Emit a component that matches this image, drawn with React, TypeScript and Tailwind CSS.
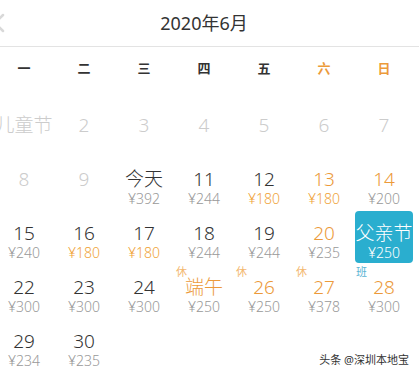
import React from "react";

type Cell = {
  label?: string;
  price?: string;
  labelColor?: string;
  priceColor?: string;
  tag?: string;
  tagColor?: string;
  selected?: boolean;
};

const GRAY = "text-[#cccccc]";
const DARK = "text-[#333333]";
const ORANGE = "text-[#ec9a3a]";
const PORANGE = "text-[#f0a43a]";
const PGRAY = "text-[#999999]";

const rows: Cell[][] = [
  [
    { label: "儿童节", labelColor: GRAY },
    { label: "2", labelColor: GRAY },
    { label: "3", labelColor: GRAY },
    { label: "4", labelColor: GRAY },
    { label: "5", labelColor: GRAY },
    { label: "6", labelColor: GRAY },
    { label: "7", labelColor: GRAY },
  ],
  [
    { label: "8", labelColor: GRAY },
    { label: "9", labelColor: GRAY },
    { label: "今天", labelColor: DARK, price: "¥392", priceColor: PGRAY },
    { label: "11", labelColor: DARK, price: "¥244", priceColor: PGRAY },
    { label: "12", labelColor: DARK, price: "¥180", priceColor: PORANGE },
    { label: "13", labelColor: ORANGE, price: "¥180", priceColor: PORANGE },
    { label: "14", labelColor: ORANGE, price: "¥200", priceColor: PGRAY },
  ],
  [
    { label: "15", labelColor: DARK, price: "¥240", priceColor: PGRAY },
    { label: "16", labelColor: DARK, price: "¥180", priceColor: PORANGE },
    { label: "17", labelColor: DARK, price: "¥180", priceColor: PORANGE },
    { label: "18", labelColor: DARK, price: "¥244", priceColor: PGRAY },
    { label: "19", labelColor: DARK, price: "¥244", priceColor: PGRAY },
    { label: "20", labelColor: ORANGE, price: "¥235", priceColor: PGRAY },
    { label: "父亲节", labelColor: "text-white", price: "¥250", priceColor: "text-white", selected: true },
  ],
  [
    { label: "22", labelColor: DARK, price: "¥300", priceColor: PGRAY },
    { label: "23", labelColor: DARK, price: "¥300", priceColor: PGRAY },
    { label: "24", labelColor: DARK, price: "¥300", priceColor: PGRAY },
    { label: "端午", labelColor: ORANGE, price: "¥250", priceColor: PGRAY, tag: "休", tagColor: "text-[#f3b870]" },
    { label: "26", labelColor: ORANGE, price: "¥250", priceColor: PGRAY, tag: "休", tagColor: "text-[#f3b870]" },
    { label: "27", labelColor: ORANGE, price: "¥378", priceColor: PGRAY, tag: "休", tagColor: "text-[#f3b870]" },
    { label: "28", labelColor: ORANGE, price: "¥300", priceColor: PGRAY, tag: "班", tagColor: "text-[#5ab3d3]" },
  ],
  [
    { label: "29", labelColor: DARK, price: "¥234", priceColor: PGRAY },
    { label: "30", labelColor: DARK, price: "¥235", priceColor: PGRAY },
    {},
    {},
    {},
    {},
    {},
  ],
];

const weekdays = [
  { t: "一", c: "text-[#333333]" },
  { t: "二", c: "text-[#333333]" },
  { t: "三", c: "text-[#333333]" },
  { t: "四", c: "text-[#333333]" },
  { t: "五", c: "text-[#333333]" },
  { t: "六", c: "text-[#ec9a3a]" },
  { t: "日", c: "text-[#ec9a3a]" },
];

function DayCell({ cell }: { cell: Cell }) {
  return (
    <div className="relative h-[54px] w-[60px]">
      {cell.selected ? (
        <div className="absolute inset-[1px] rounded-[4px] bg-[#2aaecf]" />
      ) : null}
      {cell.tag ? (
        <span className={`absolute left-[2px] top-[2px] text-[11px] leading-[12px] ${cell.tagColor}`}>
          {cell.tag}
        </span>
      ) : null}
      <div className="relative flex flex-col items-center pt-[12px]">
        {cell.label ? (
          <span className={`whitespace-nowrap text-[19px] font-light leading-[22px] ${cell.labelColor}`}>{cell.label}</span>
        ) : null}
        {cell.price ? (
          <span className={`whitespace-nowrap text-[14px] font-light leading-[18px] ${cell.priceColor}`}>{cell.price}</span>
        ) : null}
      </div>
    </div>
  );
}

export default function App() {
  return (
    <div
      className="relative h-[376px] w-[419px] overflow-hidden bg-white"
      style={{ fontFamily: '"Noto Sans", "Noto Sans CJK SC", sans-serif' }}
    >
      <div className="ml-[-6px] w-[420px]">
        <div className="relative flex h-[46px] items-center justify-center">
          <svg
            className="absolute left-[-2px] top-[13px]"
            width="14"
            height="20"
            viewBox="0 0 14 20"
            fill="none"
          >
            <path d="M11 2 L3 10 L11 18" stroke="#d9d9d9" strokeWidth="2.5" strokeLinecap="round" strokeLinejoin="round" />
          </svg>
          <span className="text-[18px] leading-[24px] text-[#333333]">2020年6月</span>
        </div>
      </div>
      <div className="h-px w-full bg-[#e3e3e3]" />
      <div className="ml-[-6px] w-[420px]">
        <div className="grid h-[44px] grid-cols-7 items-center">
          {weekdays.map((w) => (
            <div key={w.t} className={`text-center text-[13px] font-bold ${w.c}`}>
              {w.t}
            </div>
          ))}
        </div>
        <div className="flex flex-col pt-[11px]">
          {rows.map((r, i) => (
            <div key={i} className="grid grid-cols-7">
              {r.map((c, j) => (
                <DayCell key={j} cell={c} />
              ))}
            </div>
          ))}
        </div>
      </div>
      <div className="absolute bottom-[9px] right-[10px] text-[11px] leading-[14px] text-[#333333]">
        头条 @深圳本地宝
      </div>
    </div>
  );
}
